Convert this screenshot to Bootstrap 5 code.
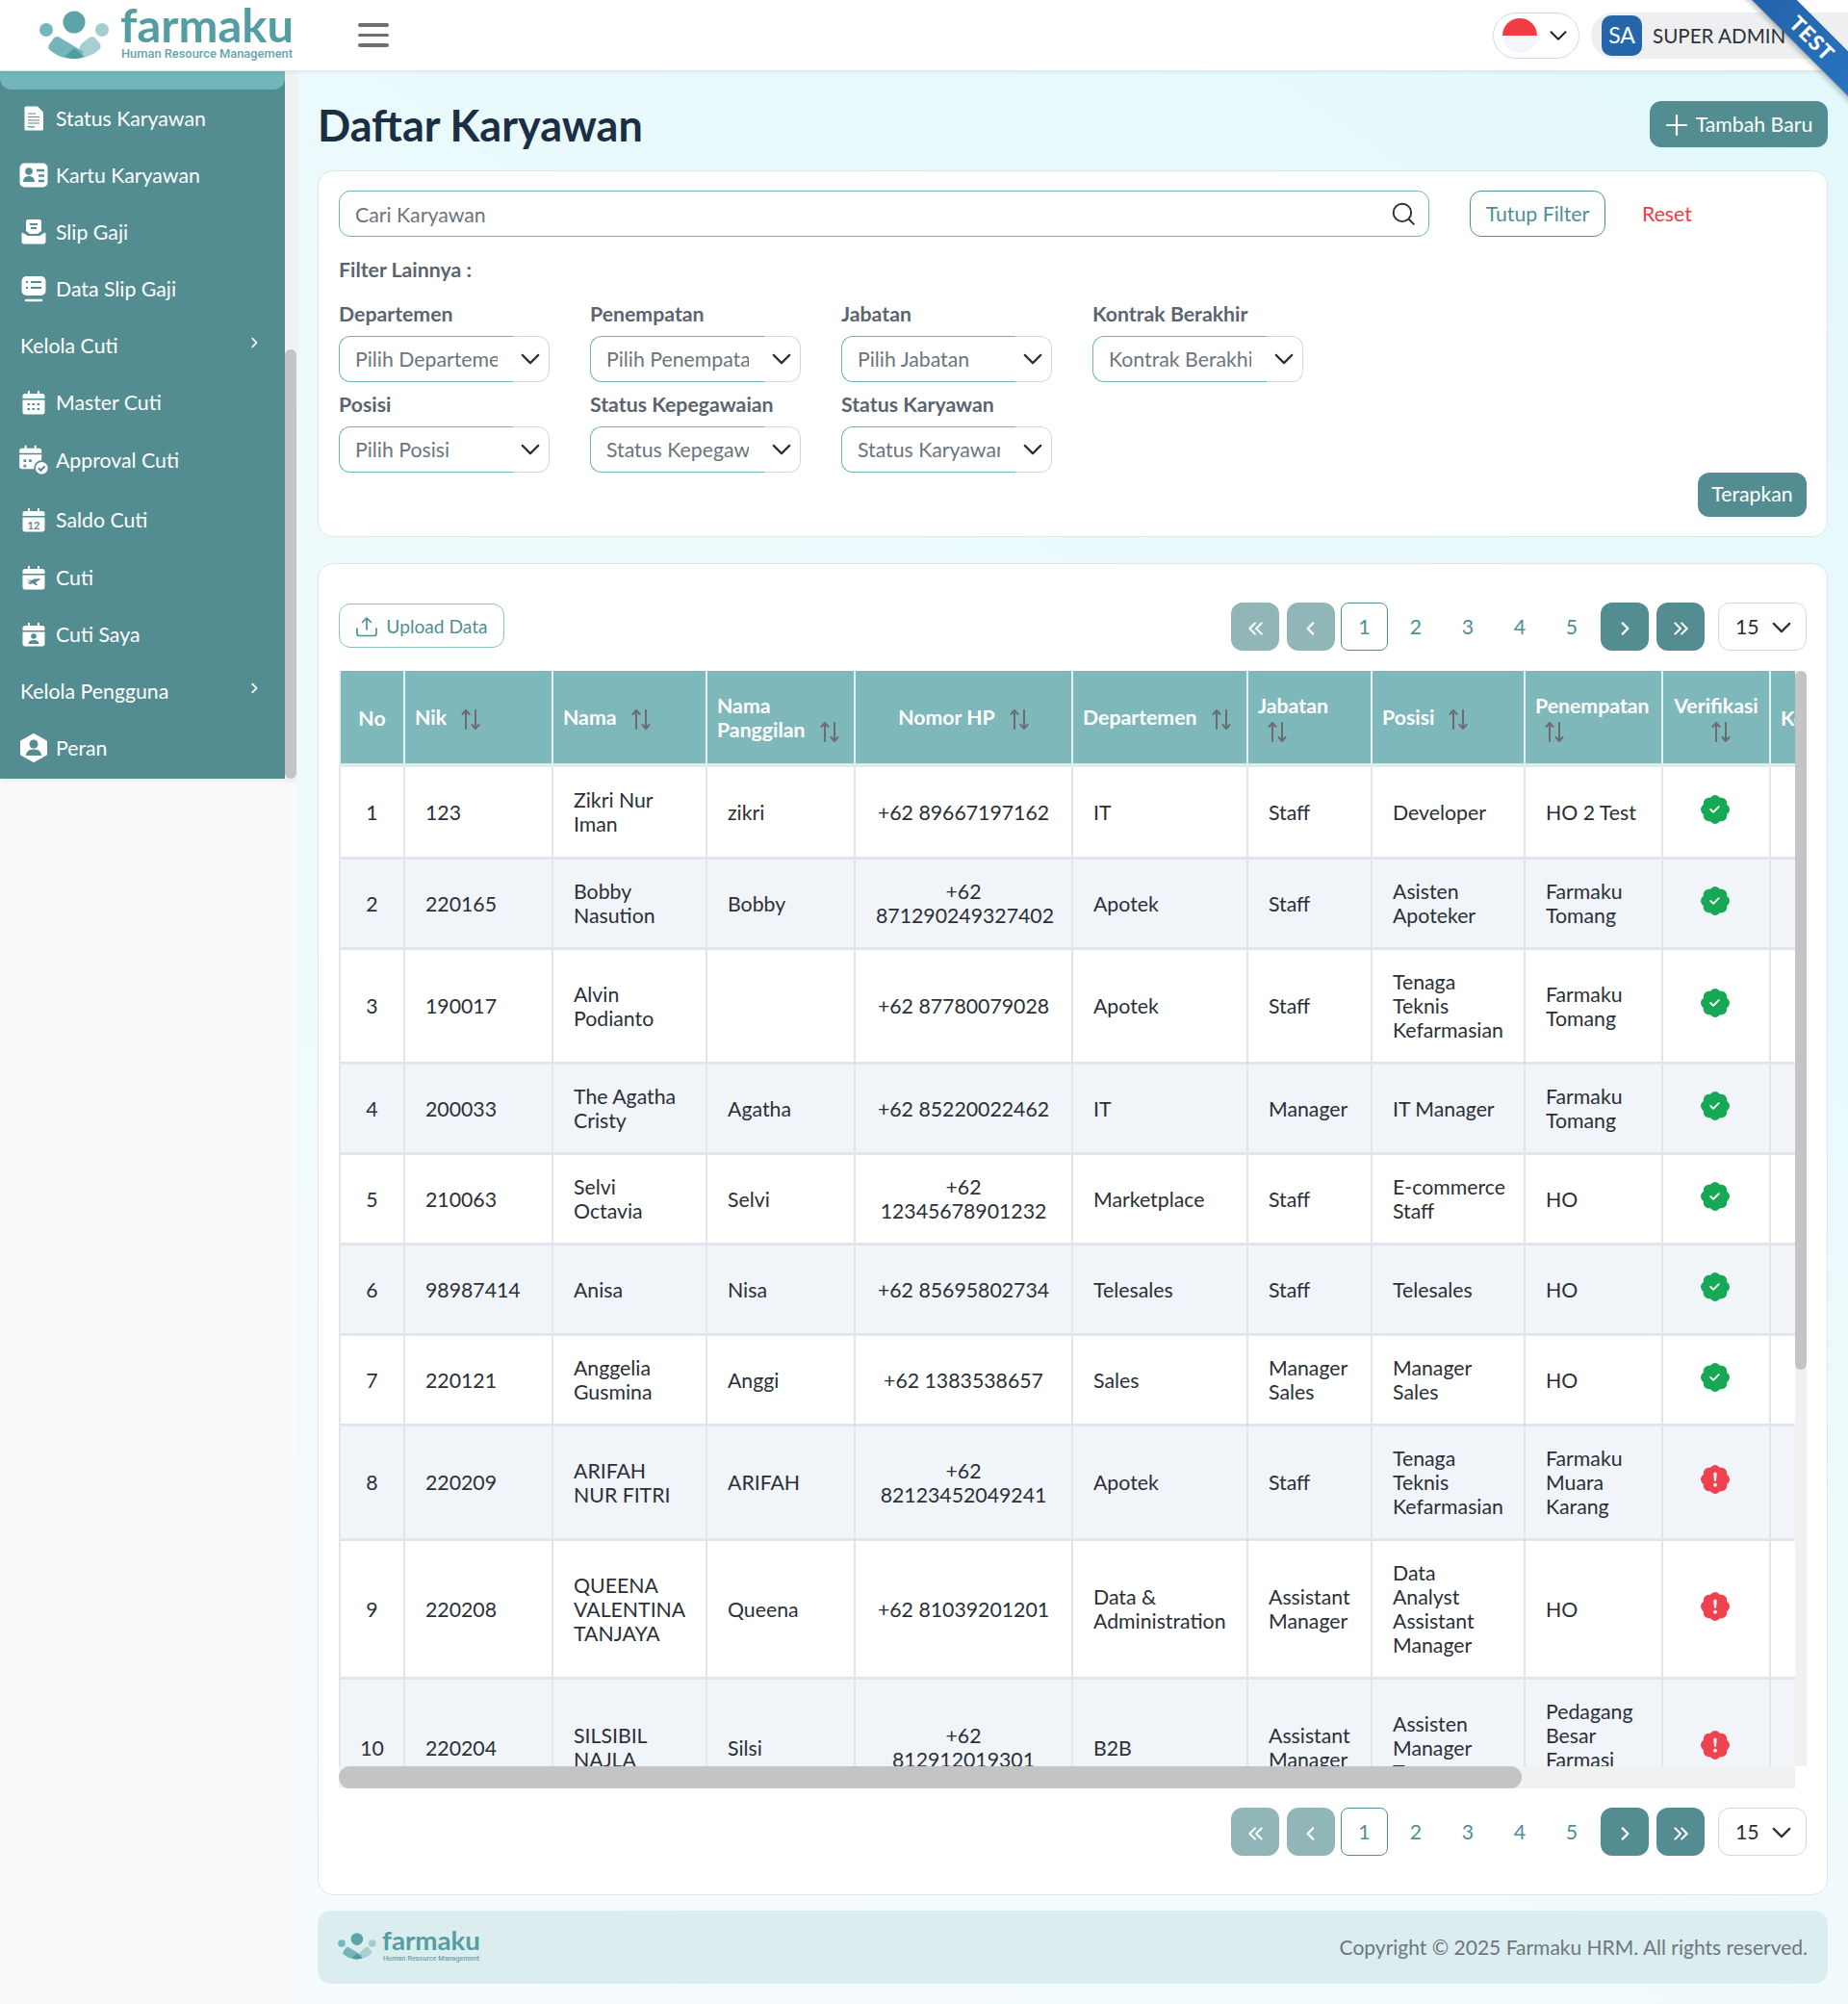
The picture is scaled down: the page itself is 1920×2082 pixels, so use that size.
<!DOCTYPE html>
<html lang="id">
<head>
<meta charset="utf-8">
<title>Daftar Karyawan</title>
<link href="https://cdn.jsdelivr.net/npm/bootstrap@5.3.0/dist/css/bootstrap.min.css" rel="stylesheet">
<style>
html,body{margin:0;padding:0}
body{font-family:"Lato","Liberation Sans",sans-serif;font-size:21.28px;color:#2b3038;width:1920px;height:2082px;overflow:hidden;background:#f8fafc}
.topbar{height:74px;background:#fff;border-bottom:1px solid #dfe5e6;position:relative;box-shadow:0 1px 4px rgba(0,0,0,.06)}
.logo-box{margin-left:41px;width:270px;height:64px}
.burger{width:32px;margin-left:61px}
.burger i{display:block;height:3.5px;background:#6d6d73;border-radius:2px;margin:7px 0}
.lang-pill{width:90px;height:48px;border:1px solid #d6d8dc;border-radius:24px;margin-right:12px;padding-left:9px;padding-right:11px}
.flag{width:36px;height:36px;border-radius:50%;background:linear-gradient(#f23c45 50%,#f3f6fa 50%)}
.user-pill{width:267px;height:48px;background:#eeeff1;border-radius:24px 0 0 24px;padding-left:11px}
.sa{width:42px;height:42px;border-radius:10px;background:#2565a9;color:#fff;font-size:23px;margin-right:11px}
.user-name{font-size:20.6px;color:#2f3237;padding-top:2px}
.ribbon-wrap{position:absolute;top:0;right:0;width:110px;height:110px;overflow:hidden;z-index:5}
.ribbon-band{position:absolute;left:-27px;top:23px;width:200px;height:33px;line-height:33px;transform:rotate(45deg);background:linear-gradient(90deg,#2260a5,#2a78c2);color:#fff;font-weight:900;font-size:22px;letter-spacing:1px;text-align:center;box-shadow:0 3px 5px rgba(0,0,0,.25)}
.side-col{width:309px;flex:none}
.side-wrap{height:735px;box-shadow:0 3px 6px rgba(0,0,0,.06)}
.side-panel{width:296px;height:735px;background:#538d91;overflow:hidden}
.side-strip{height:19px;background:#72b5ba;border-radius:0 0 12px 12px}
.side-item{height:59px;color:#fff;padding:2px 0 0 58px;position:relative}
.side-item.tall{height:61px}
.side-item.taller{height:62px}
.side-item.plain{padding-left:21px}
.side-ic{position:absolute;left:19px;top:50%;transform:translateY(-50%);width:32px;height:32px}
.side-chev{position:absolute;left:257px;top:50%;margin-top:-10px;width:14px;height:14px}
.side-rail{width:13px;background:#f1f1f2;padding-top:289px}
.side-thumb{width:12px;height:446px;background:#c4c4c6;border-radius:6px}
.main-col{flex:1;padding:31px 21px 21px;background:linear-gradient(215deg,#e2f8fb 0%,#eefafc 50%,#f7fbfd 100%);height:2008px}
.page-title{font-size:45px;font-weight:700;color:#1a2e44;margin:0;line-height:46px;padding-top:2px}
.btn-teal{background:#538d91;color:#fff;border:0;border-radius:12px;font-size:21.28px;padding:2px 0 0}
.btn-teal:hover{background:#538d91;color:#fff}
.btn-add{width:185px;height:48px}
.panel{background:#fff;border:1px solid #dfe6e8;border-radius:16px}
.panel-filter{margin-top:24px;height:381px;padding:20px 21px}
.search-field{width:1133px;height:48px}
.search-field .form-control{height:48px;border:1px solid #6cb5b8;border-radius:12px;font-size:21.28px;padding:8px 44px 6px 16px;color:#6c757d;box-shadow:none}
.search-field .form-control::placeholder{color:#6c757d;opacity:1}
.search-ic{position:absolute;right:14px;top:11px;width:26px;height:26px}
.btn-line{height:48px;border:1px solid #4f9095;border-radius:12px;color:#4f9095;font-size:21.28px;background:#fff;padding:2px 0 0}
.btn-close-filter{width:141px;margin-left:42px}
.reset-link{color:#ef3a45;margin-left:38px;text-decoration:none;padding-top:2px}
.filter-title{font-weight:700;color:#5b6470;line-height:25px;margin-top:22px;height:22px}
.filter-grid{display:grid;grid-template-columns:repeat(4,219px);column-gap:42px;margin-top:13px}
.fld-label{font-weight:700;color:#5b6470;height:46px;line-height:24px;padding-top:11px}
.sel-box{height:48px}
.sel-left{flex:1;min-width:0;border:1px solid #6cb5b8;border-right:0;border-radius:12px 0 0 12px;padding:1px 16px 0 16px;color:#6c757d;overflow:hidden}
.sel-left span{display:block;overflow:hidden;white-space:nowrap}
.sel-right{width:38px;flex:none;border:1px solid #d6d8dc;border-left:0;border-radius:0 12px 12px 0}
.sel-right svg{width:22px;height:22px;margin-left:7px}
.btn-teal.btn-apply{width:113px;height:46px;margin-right:0;padding-top:0}
.panel-table{margin-top:27px;height:1384px;padding:40px 21px 0}
.btn-upload{width:172px;height:46px;border-color:#8cc0c2;border-radius:12px;color:#4f9095;font-size:19.2px;margin-top:1px}
.btn-upload svg{width:24px;height:24px;margin-right:8px}
.pager{height:50px}
.pager-bottom{margin-top:20px}
.pg-btn{width:50px;height:50px;border-radius:12px;background:#538d91;color:#fff;border:0;margin-right:8px;padding:0}
.pg-btn.off{background:#91b6b8}
.pg-btn svg{width:18px;height:18px}
.pg-one{width:49px;height:50px;border:1px solid #4f9095;border-radius:8px;color:#4f9095;margin:0 2px 0 -2px;background:#fff;padding-top:2px}
.pg-num{width:54px;height:50px;color:#4f9095;padding-top:2px}
.pg-last{margin-right:3px}
.pg-size{width:92px;height:50px;border:1px solid #d6d8dc;border-radius:12px;margin-left:14px;color:#2b3038;padding:2px 14px 0 17px}
.pg-size svg{width:22px;height:22px}
.tbl-frame{width:1525px;margin-top:21px}
.tbl-left{width:1513px}
.tbl-view{height:1138px;overflow:hidden}
.rail-h{height:23px;background:#f1f1f2}
.thumb-h{width:1229px;height:23px;background:#c4c4c6;border-radius:12px}
.rail-v{width:12px;height:1138px;background:#f1f1f2}
.thumb-v{width:12px;height:726px;background:#c4c4c6;border-radius:6px}
.emp-table{table-layout:fixed;width:1862px;border-collapse:collapse;font-size:21.28px;line-height:25px;color:#2b3038;margin:0}
.emp-table th{background:#7fb8ba;color:#fff;font-weight:700;height:98px;padding:2px 10px 0;border:2px solid #e6f0f0;border-top:0;border-bottom:4px solid #e0ecec;vertical-align:middle;overflow:hidden}
.emp-table td{height:94px;padding:21.5px 21px 19.5px;border:2px solid #e2e6ec;border-top:3px solid #e2e6ec;border-bottom:3px solid #e2e6ec;vertical-align:middle}
.emp-table tbody tr:first-child td{height:96px}
.emp-table tr:nth-child(even) td{background:#f1f5fa}
.emp-table tr:nth-child(odd) td{background:#fff}
.emp-table td.no-pad{padding-left:2px;padding-right:2px}
.c-no{width:67px}.c-nik{width:154px}.c-nm{width:160px}.c-pg{width:154px}.c-hp{width:226px}.c-dp{width:182px}.c-jb{width:129px}.c-ps{width:159px}.c-pn{width:143px}.c-vf{width:112px}.c-kn{width:188px}.c-ak{width:188px}
.sort-ic{display:inline-block;width:20px;height:23px;margin-left:15px;vertical-align:-6px}
.sort-ic.wrapped{margin-left:10px}
.ver-ic{display:block;width:30px;height:30px;margin:-3.5px 0 3.5px 18px}
.site-foot{margin-top:16px;height:76px;background:#dbedee;border-radius:14px;padding:0 21px}
.foot-copy{color:#6e7780;font-size:21px}
.foot-logo{width:152px;height:36px}
</style>
</head>
<body>
<svg width="0" height="0" class="position-absolute">
<defs>
<symbol id="logo-mark" viewBox="0 0 76 62">
<circle cx="36" cy="12" r="11.5" fill="#5ea3a8"/>
<circle cx="7" cy="20" r="7" fill="#73b8bd"/>
<circle cx="65" cy="20" r="7" fill="#a3cdd0"/>
<path d="M43 35 51 28.500c2.500-2 5-2 7 0l4 5c2.500 3 2 6-1 8C54 47 46 50 37 50z" fill="#a6cfd2"/>
<path d="M36 50C26 50 18 47 12 42c-3-2-3.500-5-1-8l4-5.500c2-2 4.500-2 7 0L46 43 40 49z" fill="#73b5ba"/>
<path d="M36 39 26.500 47.500C30 49.500 33 50 36.500 50c3.500 0 6.500-.5 10-2.500z" fill="#4f9ca1"/>
</symbol>
<symbol id="chev-d" viewBox="0 0 16 16"><path fill="none" stroke="currentColor" stroke-width="1.600" stroke-linecap="round" stroke-linejoin="round" d="M2 5l6 6 6-6"/></symbol>
<symbol id="chev-r" viewBox="0 0 16 16"><path fill="none" stroke="currentColor" stroke-width="2" stroke-linecap="round" stroke-linejoin="round" d="M6 3l5 5-5 5"/></symbol>
<symbol id="chev-l" viewBox="0 0 16 16"><path fill="none" stroke="currentColor" stroke-width="2" stroke-linecap="round" stroke-linejoin="round" d="M10 3L5 8l5 5"/></symbol>
<symbol id="chevs-r" viewBox="0 0 16 16"><path fill="none" stroke="currentColor" stroke-width="1.800" stroke-linecap="round" stroke-linejoin="round" d="M3 3l5 5-5 5M9 3l5 5-5 5"/></symbol>
<symbol id="chevs-l" viewBox="0 0 16 16"><path fill="none" stroke="currentColor" stroke-width="1.800" stroke-linecap="round" stroke-linejoin="round" d="M8 3L3 8l5 5M14 3L9 8l5 5"/></symbol>
<symbol id="sort" viewBox="0 0 20 23"><g fill="none" stroke="#6e6a74" stroke-width="2" stroke-linecap="round" stroke-linejoin="round"><path d="M5 21V2M1.500 6 5 2l3.500 4"/><path d="M15 2v19M11.500 17l3.500 4 3.500-4"/></g></symbol>
<symbol id="ok" viewBox="0 0 16 16"><path fill="#16a855" d="M10.067.87a2.89 2.89 0 0 0-4.134 0l-.622.638-.89-.011a2.89 2.89 0 0 0-2.924 2.924l.01.89-.636.622a2.89 2.89 0 0 0 0 4.134l.637.622-.011.89a2.89 2.89 0 0 0 2.924 2.924l.89-.01.622.636a2.89 2.89 0 0 0 4.134 0l.622-.637.89.011a2.89 2.89 0 0 0 2.924-2.924l-.01-.89.636-.622a2.89 2.89 0 0 0 0-4.134l-.637-.622.011-.89a2.89 2.89 0 0 0-2.924-2.924l-.89.01-.622-.636zm.287 5.984-3 3a.5.5 0 0 1-.708 0l-1.500-1.500a.5.5 0 1 1 .708-.708L7 8.793l2.646-2.647a.5.5 0 0 1 .708.708z"/></symbol>
<symbol id="bad" viewBox="0 0 16 16"><path fill="#f0414f" d="M10.067.87a2.89 2.89 0 0 0-4.134 0l-.622.638-.89-.011a2.89 2.89 0 0 0-2.924 2.924l.01.89-.636.622a2.89 2.89 0 0 0 0 4.134l.637.622-.011.89a2.89 2.89 0 0 0 2.924 2.924l.89-.01.622.636a2.89 2.89 0 0 0 4.134 0l.622-.637.89.011a2.89 2.89 0 0 0 2.924-2.924l-.01-.89.636-.622a2.89 2.89 0 0 0 0-4.134l-.637-.622.011-.89a2.89 2.89 0 0 0-2.924-2.924l-.89.01-.622-.636zM8 4c.535 0 .954.462.9.995l-.35 3.507a.552.552 0 0 1-1.100 0L7.100 4.995A.905.905 0 0 1 8 4zm.002 6a1 1 0 1 1 0 2 1 1 0 0 1 0-2z"/></symbol>
<symbol id="cal" viewBox="0 0 32 32"><path fill="#fff" d="M10 4h2v3h8V4h2v3h3c1.500 0 2.500 1 2.500 2.500V12h-23V9.500C4.500 8 5.500 7 7 7h3zM4.500 13.500h23V26c0 1.500-1 2.500-2.500 2.500H7c-1.500 0-2.500-1-2.500-2.500z"/></symbol>
</defs>
</svg>

<header class="topbar d-flex align-items-center">
  <svg class="logo-box flex-none" viewBox="0 0 270 64" aria-label="Farmaku">
    <use href="#logo-mark" x="0" y="6" width="76" height="62"/>
    <text x="84" y="39" font-family="Lato, sans-serif" font-weight="700" font-size="48" fill="#549ea3" textLength="180" lengthAdjust="spacingAndGlyphs">farmaku</text>
    <text x="85" y="55" font-family="Roboto, sans-serif" font-weight="500" font-size="12.500" fill="#62a7ab" textLength="178" lengthAdjust="spacingAndGlyphs">Human Resource Management</text>
  </svg>
  <div class="burger"><i></i><i></i><i></i></div>
  <div class="ms-auto d-flex align-items-center">
    <div class="lang-pill d-flex align-items-center justify-content-between">
      <span class="flag d-block"></span>
      <svg width="20" height="20" class="text-dark"><use href="#chev-d"/></svg>
    </div>
    <div class="user-pill d-flex align-items-center">
      <span class="sa d-flex align-items-center justify-content-center">SA</span>
      <span class="user-name">SUPER ADMIN</span>
    </div>
  </div>
  <div class="ribbon-wrap"><div class="ribbon-band">TEST</div></div>
</header>

<div class="d-flex">
  <div class="side-col">
    <div class="side-wrap d-flex">
      <nav class="side-panel">
        <div class="side-strip"></div>
        <div class="side-item d-flex align-items-center">
          <svg class="side-ic" viewBox="0 0 32 32"><path fill="#fff" d="M8 3.500h12l6 6V27c0 1-.6 1.500-1.500 1.500h-16.500C7 28.500 6.500 28 6.500 27V5C6.500 4 7 3.500 8 3.500z"/><path stroke="#538d91" stroke-width="1.200" fill="none" d="M10 11h8M10 14.500h12M10 18h12M10 21h12M10 25c2-2 2.500 1 4 0s2 0 3.500 0"/></svg>
          Status Karyawan</div>
        <div class="side-item d-flex align-items-center">
          <svg class="side-ic" viewBox="0 0 32 32"><rect x="1.500" y="3.500" width="29" height="25" rx="5" fill="#fff"/><circle cx="11" cy="12" r="3.800" fill="#538d91"/><path fill="#538d91" d="M5 23c0-4 2.500-6 6-6s6 2 6 6z"/><path stroke="#538d91" stroke-width="2.400" d="M19 11h8M21 16.500h6M21 22h6"/></svg>
          Kartu Karyawan</div>
        <div class="side-item d-flex align-items-center">
          <svg class="side-ic" viewBox="0 0 32 32"><path fill="#fff" d="M8 5c0-1 1-2 2-2h12c1 0 2 1 2 2v10l-4 3h-8l-4-3zM5 17l5 3h12l5-3c.8-.5 1.500 0 1.500 1v8c0 1.500-1 2.500-2.500 2.500H6c-1.500 0-2.500-1-2.500-2.500v-8c0-1 .7-1.500 1.500-1z"/><path stroke="#538d91" stroke-width="1.800" d="M12 8h8M13 12h6"/></svg>
          Slip Gaji</div>
        <div class="side-item d-flex align-items-center">
          <svg class="side-ic" viewBox="0 0 32 32"><rect x="3.500" y="3" width="25" height="20" rx="5" fill="#fff"/><path stroke="#538d91" stroke-width="2" d="M8 9h2M13 9h11M8 15h2M13 15h11"/><path stroke="#fff" stroke-width="2.500" stroke-linecap="round" d="M8 28h16"/></svg>
          Data Slip Gaji</div>
        <div class="side-item plain d-flex align-items-center">Kelola Cuti
          <svg class="side-chev text-white"><use href="#chev-r"/></svg></div>
        <div class="side-item d-flex align-items-center">
          <svg class="side-ic" viewBox="0 0 32 32"><use href="#cal"/><path stroke="#538d91" stroke-width="2.200" stroke-dasharray="2.500 2.500" d="M9.500 18h13M9.500 23h13"/></svg>
          Master Cuti</div>
        <div class="side-item taller d-flex align-items-center">
          <svg class="side-ic" viewBox="3 3 29 29"><use href="#cal"/><path stroke="#538d91" stroke-width="2.400" stroke-dasharray="2.500 2.500" d="M8 18h8M8 23h5"/><circle cx="25" cy="25" r="6.500" fill="#fff" stroke="#538d91" stroke-width="1.500"/><path d="M22 25l2.200 2.200 3.800-4" stroke="#538d91" stroke-width="1.800" fill="none"/></svg>
          Approval Cuti</div>
        <div class="side-item tall d-flex align-items-center">
          <svg class="side-ic" viewBox="0 0 32 32"><use href="#cal"/><text x="16" y="26" font-size="11" font-weight="700" text-anchor="middle" fill="#538d91" font-family="Lato, sans-serif">12</text></svg>
          Saldo Cuti</div>
        <div class="side-item d-flex align-items-center">
          <svg class="side-ic" viewBox="0 0 32 32"><use href="#cal"/><path fill="#538d91" d="M9 18l4 1 4-1.500 5-.5c1 0 1 1 0 1.500l-4 2.500 2 3-2 0-3-2-3 1-3-3 2 1 2-.5z"/></svg>
          Cuti</div>
        <div class="side-item d-flex align-items-center">
          <svg class="side-ic" viewBox="0 0 32 32"><use href="#cal"/><circle cx="16" cy="18" r="2.800" fill="#538d91"/><path fill="#538d91" d="M10.500 26c0-2.800 2.500-4 5.500-4s5.500 1.200 5.500 4z"/></svg>
          Cuti Saya</div>
        <div class="side-item plain d-flex align-items-center">Kelola Pengguna
          <svg class="side-chev text-white"><use href="#chev-r"/></svg></div>
        <div class="side-item d-flex align-items-center">
          <svg class="side-ic" viewBox="0 0 32 32"><polygon points="16,2.500 28.500,9.500 28.500,22.500 16,29.500 3.500,22.500 3.500,9.500" fill="#fff" stroke="#fff" stroke-width="3" stroke-linejoin="round"/><circle cx="16" cy="12" r="4.500" fill="#538d91"/><path fill="#538d91" d="M8 24c0-4.500 3.500-6.500 8-6.500s8 2 8 6.500z"/></svg>
          Peran</div>
      </nav>
      <div class="side-rail"><div class="side-thumb"></div></div>
    </div>
  </div>

  <main class="main-col flex-grow-1">
    <div class="d-flex justify-content-between align-items-center">
      <h1 class="page-title">Daftar Karyawan</h1>
      <button class="btn btn-teal btn-add d-flex align-items-center justify-content-center gap-2">
        <svg width="24" height="24" viewBox="0 0 24 24"><path d="M12 2v20M2 12h20" stroke="#fff" stroke-width="2.200" stroke-linecap="round"/></svg>
        Tambah Baru
      </button>
    </div>

    <section class="panel panel-filter">
      <div class="d-flex align-items-center">
        <div class="search-field position-relative">
          <input class="form-control" type="text" placeholder="Cari Karyawan">
          <svg class="search-ic" viewBox="0 0 24 24"><circle cx="11" cy="11" r="8.500" fill="none" stroke="#2b3038" stroke-width="1.800"/><path d="M17.500 17.500 22 22" stroke="#2b3038" stroke-width="1.800" stroke-linecap="round"/></svg>
        </div>
        <button class="btn btn-line btn-close-filter">Tutup Filter</button>
        <a class="reset-link" href="#">Reset</a>
      </div>
      <div class="filter-title">Filter Lainnya :</div>
      <div class="filter-grid">
        <div><div class="fld-label">Departemen</div><div class="sel-box d-flex"><div class="sel-left d-flex align-items-center"><span>Pilih Departemen</span></div><div class="sel-right d-flex align-items-center"><svg><use href="#chev-d"/></svg></div></div></div>
        <div><div class="fld-label">Penempatan</div><div class="sel-box d-flex"><div class="sel-left d-flex align-items-center"><span>Pilih Penempatan</span></div><div class="sel-right d-flex align-items-center"><svg><use href="#chev-d"/></svg></div></div></div>
        <div><div class="fld-label">Jabatan</div><div class="sel-box d-flex"><div class="sel-left d-flex align-items-center"><span>Pilih Jabatan</span></div><div class="sel-right d-flex align-items-center"><svg><use href="#chev-d"/></svg></div></div></div>
        <div><div class="fld-label">Kontrak Berakhir</div><div class="sel-box d-flex"><div class="sel-left d-flex align-items-center"><span>Kontrak Berakhir</span></div><div class="sel-right d-flex align-items-center"><svg><use href="#chev-d"/></svg></div></div></div>
        <div><div class="fld-label">Posisi</div><div class="sel-box d-flex"><div class="sel-left d-flex align-items-center"><span>Pilih Posisi</span></div><div class="sel-right d-flex align-items-center"><svg><use href="#chev-d"/></svg></div></div></div>
        <div><div class="fld-label">Status Kepegawaian</div><div class="sel-box d-flex"><div class="sel-left d-flex align-items-center"><span>Status Kepegawaian</span></div><div class="sel-right d-flex align-items-center"><svg><use href="#chev-d"/></svg></div></div></div>
        <div><div class="fld-label">Status Karyawan</div><div class="sel-box d-flex"><div class="sel-left d-flex align-items-center"><span>Status Karyawan</span></div><div class="sel-right d-flex align-items-center"><svg><use href="#chev-d"/></svg></div></div></div>
      </div>
      <div class="d-flex justify-content-end"><button class="btn btn-teal btn-apply">Terapkan</button></div>
    </section>

    <section class="panel panel-table">
      <div class="d-flex justify-content-between">
        <button class="btn btn-line btn-upload d-flex align-items-center justify-content-center">
          <svg viewBox="0 0 24 24"><path d="M12 15V3M7.500 7.500 12 3l4.500 4.500M2 14v5c0 1.500 1 2.500 2.500 2.500h15c1.500 0 2.500-1 2.500-2.500v-5" fill="none" stroke="#4f9095" stroke-width="1.700" stroke-linecap="round" stroke-linejoin="round"/></svg>
          Upload Data
        </button>
        <div class="pager d-flex align-items-center">
          <button class="pg-btn off"><svg><use href="#chevs-l"/></svg></button>
          <button class="pg-btn off"><svg><use href="#chev-l"/></svg></button>
          <span class="pg-one d-flex align-items-center justify-content-center">1</span>
          <span class="pg-num d-flex align-items-center justify-content-center">2</span>
          <span class="pg-num d-flex align-items-center justify-content-center">3</span>
          <span class="pg-num d-flex align-items-center justify-content-center">4</span>
          <span class="pg-num pg-last d-flex align-items-center justify-content-center">5</span>
          <button class="pg-btn"><svg><use href="#chev-r"/></svg></button>
          <button class="pg-btn me-0"><svg><use href="#chevs-r"/></svg></button>
          <div class="pg-size d-flex align-items-center justify-content-between"><span>15</span><svg><use href="#chev-d"/></svg></div>
        </div>
      </div>

      <div class="tbl-frame d-flex">
        <div class="tbl-left">
          <div class="tbl-view">
            <table class="emp-table">
              <thead>
                <tr>
                  <th class="c-no text-center">No</th>
                  <th class="c-nik">Nik<svg class="sort-ic"><use href="#sort"/></svg></th>
                  <th class="c-nm">Nama<svg class="sort-ic"><use href="#sort"/></svg></th>
                  <th class="c-pg">Nama Panggilan<svg class="sort-ic"><use href="#sort"/></svg></th>
                  <th class="c-hp text-center">Nomor HP<svg class="sort-ic"><use href="#sort"/></svg></th>
                  <th class="c-dp">Departemen<svg class="sort-ic"><use href="#sort"/></svg></th>
                  <th class="c-jb">Jabatan <svg class="sort-ic wrapped"><use href="#sort"/></svg></th>
                  <th class="c-ps">Posisi<svg class="sort-ic"><use href="#sort"/></svg></th>
                  <th class="c-pn">Penempatan <svg class="sort-ic wrapped"><use href="#sort"/></svg></th>
                  <th class="c-vf text-center">Verifikasi <svg class="sort-ic wrapped"><use href="#sort"/></svg></th>
                  <th class="c-kn">Kontrak Berakhir</th>
                  <th class="c-ak"></th>
                </tr>
              </thead>
              <tbody>
                <tr><td class="no-pad text-center">1</td><td>123</td><td>Zikri Nur Iman</td><td>zikri</td><td class="no-pad text-center">+62 89667197162</td><td>IT</td><td>Staff</td><td>Developer</td><td>HO 2 Test</td><td><svg class="ver-ic"><use href="#ok"/></svg></td><td></td><td></td></tr>
                <tr><td class="no-pad text-center">2</td><td>220165</td><td>Bobby Nasution</td><td>Bobby</td><td class="text-center">+62 871290249327402</td><td>Apotek</td><td>Staff</td><td>Asisten Apoteker</td><td>Farmaku Tomang</td><td><svg class="ver-ic"><use href="#ok"/></svg></td><td></td><td></td></tr>
                <tr><td class="no-pad text-center">3</td><td>190017</td><td>Alvin Podianto</td><td></td><td class="no-pad text-center">+62 87780079028</td><td>Apotek</td><td>Staff</td><td>Tenaga Teknis Kefarmasian</td><td>Farmaku Tomang</td><td><svg class="ver-ic"><use href="#ok"/></svg></td><td></td><td></td></tr>
                <tr><td class="no-pad text-center">4</td><td>200033</td><td>The Agatha Cristy</td><td>Agatha</td><td class="no-pad text-center">+62 85220022462</td><td>IT</td><td>Manager</td><td>IT Manager</td><td>Farmaku Tomang</td><td><svg class="ver-ic"><use href="#ok"/></svg></td><td></td><td></td></tr>
                <tr><td class="no-pad text-center">5</td><td>210063</td><td>Selvi Octavia</td><td>Selvi</td><td class="text-center">+62 12345678901232</td><td>Marketplace</td><td>Staff</td><td><span class="text-nowrap">E-commerce</span> Staff</td><td>HO</td><td><svg class="ver-ic"><use href="#ok"/></svg></td><td></td><td></td></tr>
                <tr><td class="no-pad text-center">6</td><td>98987414</td><td>Anisa</td><td>Nisa</td><td class="no-pad text-center">+62 85695802734</td><td>Telesales</td><td>Staff</td><td>Telesales</td><td>HO</td><td><svg class="ver-ic"><use href="#ok"/></svg></td><td></td><td></td></tr>
                <tr><td class="no-pad text-center">7</td><td>220121</td><td>Anggelia Gusmina</td><td>Anggi</td><td class="no-pad text-center">+62 1383538657</td><td>Sales</td><td>Manager Sales</td><td>Manager Sales</td><td>HO</td><td><svg class="ver-ic"><use href="#ok"/></svg></td><td></td><td></td></tr>
                <tr><td class="no-pad text-center">8</td><td>220209</td><td>ARIFAH NUR FITRI</td><td>ARIFAH</td><td class="text-center">+62 82123452049241</td><td>Apotek</td><td>Staff</td><td>Tenaga Teknis Kefarmasian</td><td>Farmaku Muara Karang</td><td><svg class="ver-ic"><use href="#bad"/></svg></td><td></td><td></td></tr>
                <tr><td class="no-pad text-center">9</td><td>220208</td><td>QUEENA VALENTINA TANJAYA</td><td>Queena</td><td class="no-pad text-center">+62 81039201201</td><td>Data &amp; Administration</td><td>Assistant Manager</td><td>Data Analyst Assistant Manager</td><td>HO</td><td><svg class="ver-ic"><use href="#bad"/></svg></td><td></td><td></td></tr>
                <tr><td class="no-pad text-center">10</td><td>220204</td><td>SILSIBIL NAJLA</td><td>Silsi</td><td class="text-center">+62 812912019301</td><td>B2B</td><td>Assistant Manager</td><td>Assisten Manager Tenaga</td><td>Pedagang Besar Farmasi<br>&nbsp;</td><td><svg class="ver-ic"><use href="#bad"/></svg></td><td></td><td></td></tr>
              </tbody>
            </table>
          </div>
          <div class="rail-h"><div class="thumb-h"></div></div>
        </div>
        <div class="rail-v"><div class="thumb-v"></div></div>
      </div>

      <div class="pager pager-bottom d-flex align-items-center justify-content-end">
        <button class="pg-btn off"><svg><use href="#chevs-l"/></svg></button>
        <button class="pg-btn off"><svg><use href="#chev-l"/></svg></button>
        <span class="pg-one d-flex align-items-center justify-content-center">1</span>
        <span class="pg-num d-flex align-items-center justify-content-center">2</span>
        <span class="pg-num d-flex align-items-center justify-content-center">3</span>
        <span class="pg-num d-flex align-items-center justify-content-center">4</span>
        <span class="pg-num pg-last d-flex align-items-center justify-content-center">5</span>
        <button class="pg-btn"><svg><use href="#chev-r"/></svg></button>
        <button class="pg-btn me-0"><svg><use href="#chevs-r"/></svg></button>
        <div class="pg-size d-flex align-items-center justify-content-between"><span>15</span><svg><use href="#chev-d"/></svg></div>
      </div>
    </section>

    <footer class="site-foot d-flex align-items-center justify-content-between">
      <svg class="foot-logo" viewBox="0 0 152 36" aria-label="Farmaku">
        <use href="#logo-mark" x="0" y="3" width="42" height="34"/>
        <text x="46" y="21" font-family="Lato, sans-serif" font-weight="700" font-size="27" fill="#549ea3" textLength="102" lengthAdjust="spacingAndGlyphs">farmaku</text>
        <text x="47" y="32" font-family="Roboto, sans-serif" font-weight="500" font-size="7" fill="#62a7ab" textLength="100" lengthAdjust="spacingAndGlyphs">Human Resource Management</text>
      </svg>
      <span class="foot-copy">Copyright © 2025 Farmaku HRM. All rights reserved.</span>
    </footer>
  </main>
</div>
<script src="https://cdn.jsdelivr.net/npm/bootstrap@5.3.0/dist/js/bootstrap.bundle.min.js"></script>
</body>
</html>
